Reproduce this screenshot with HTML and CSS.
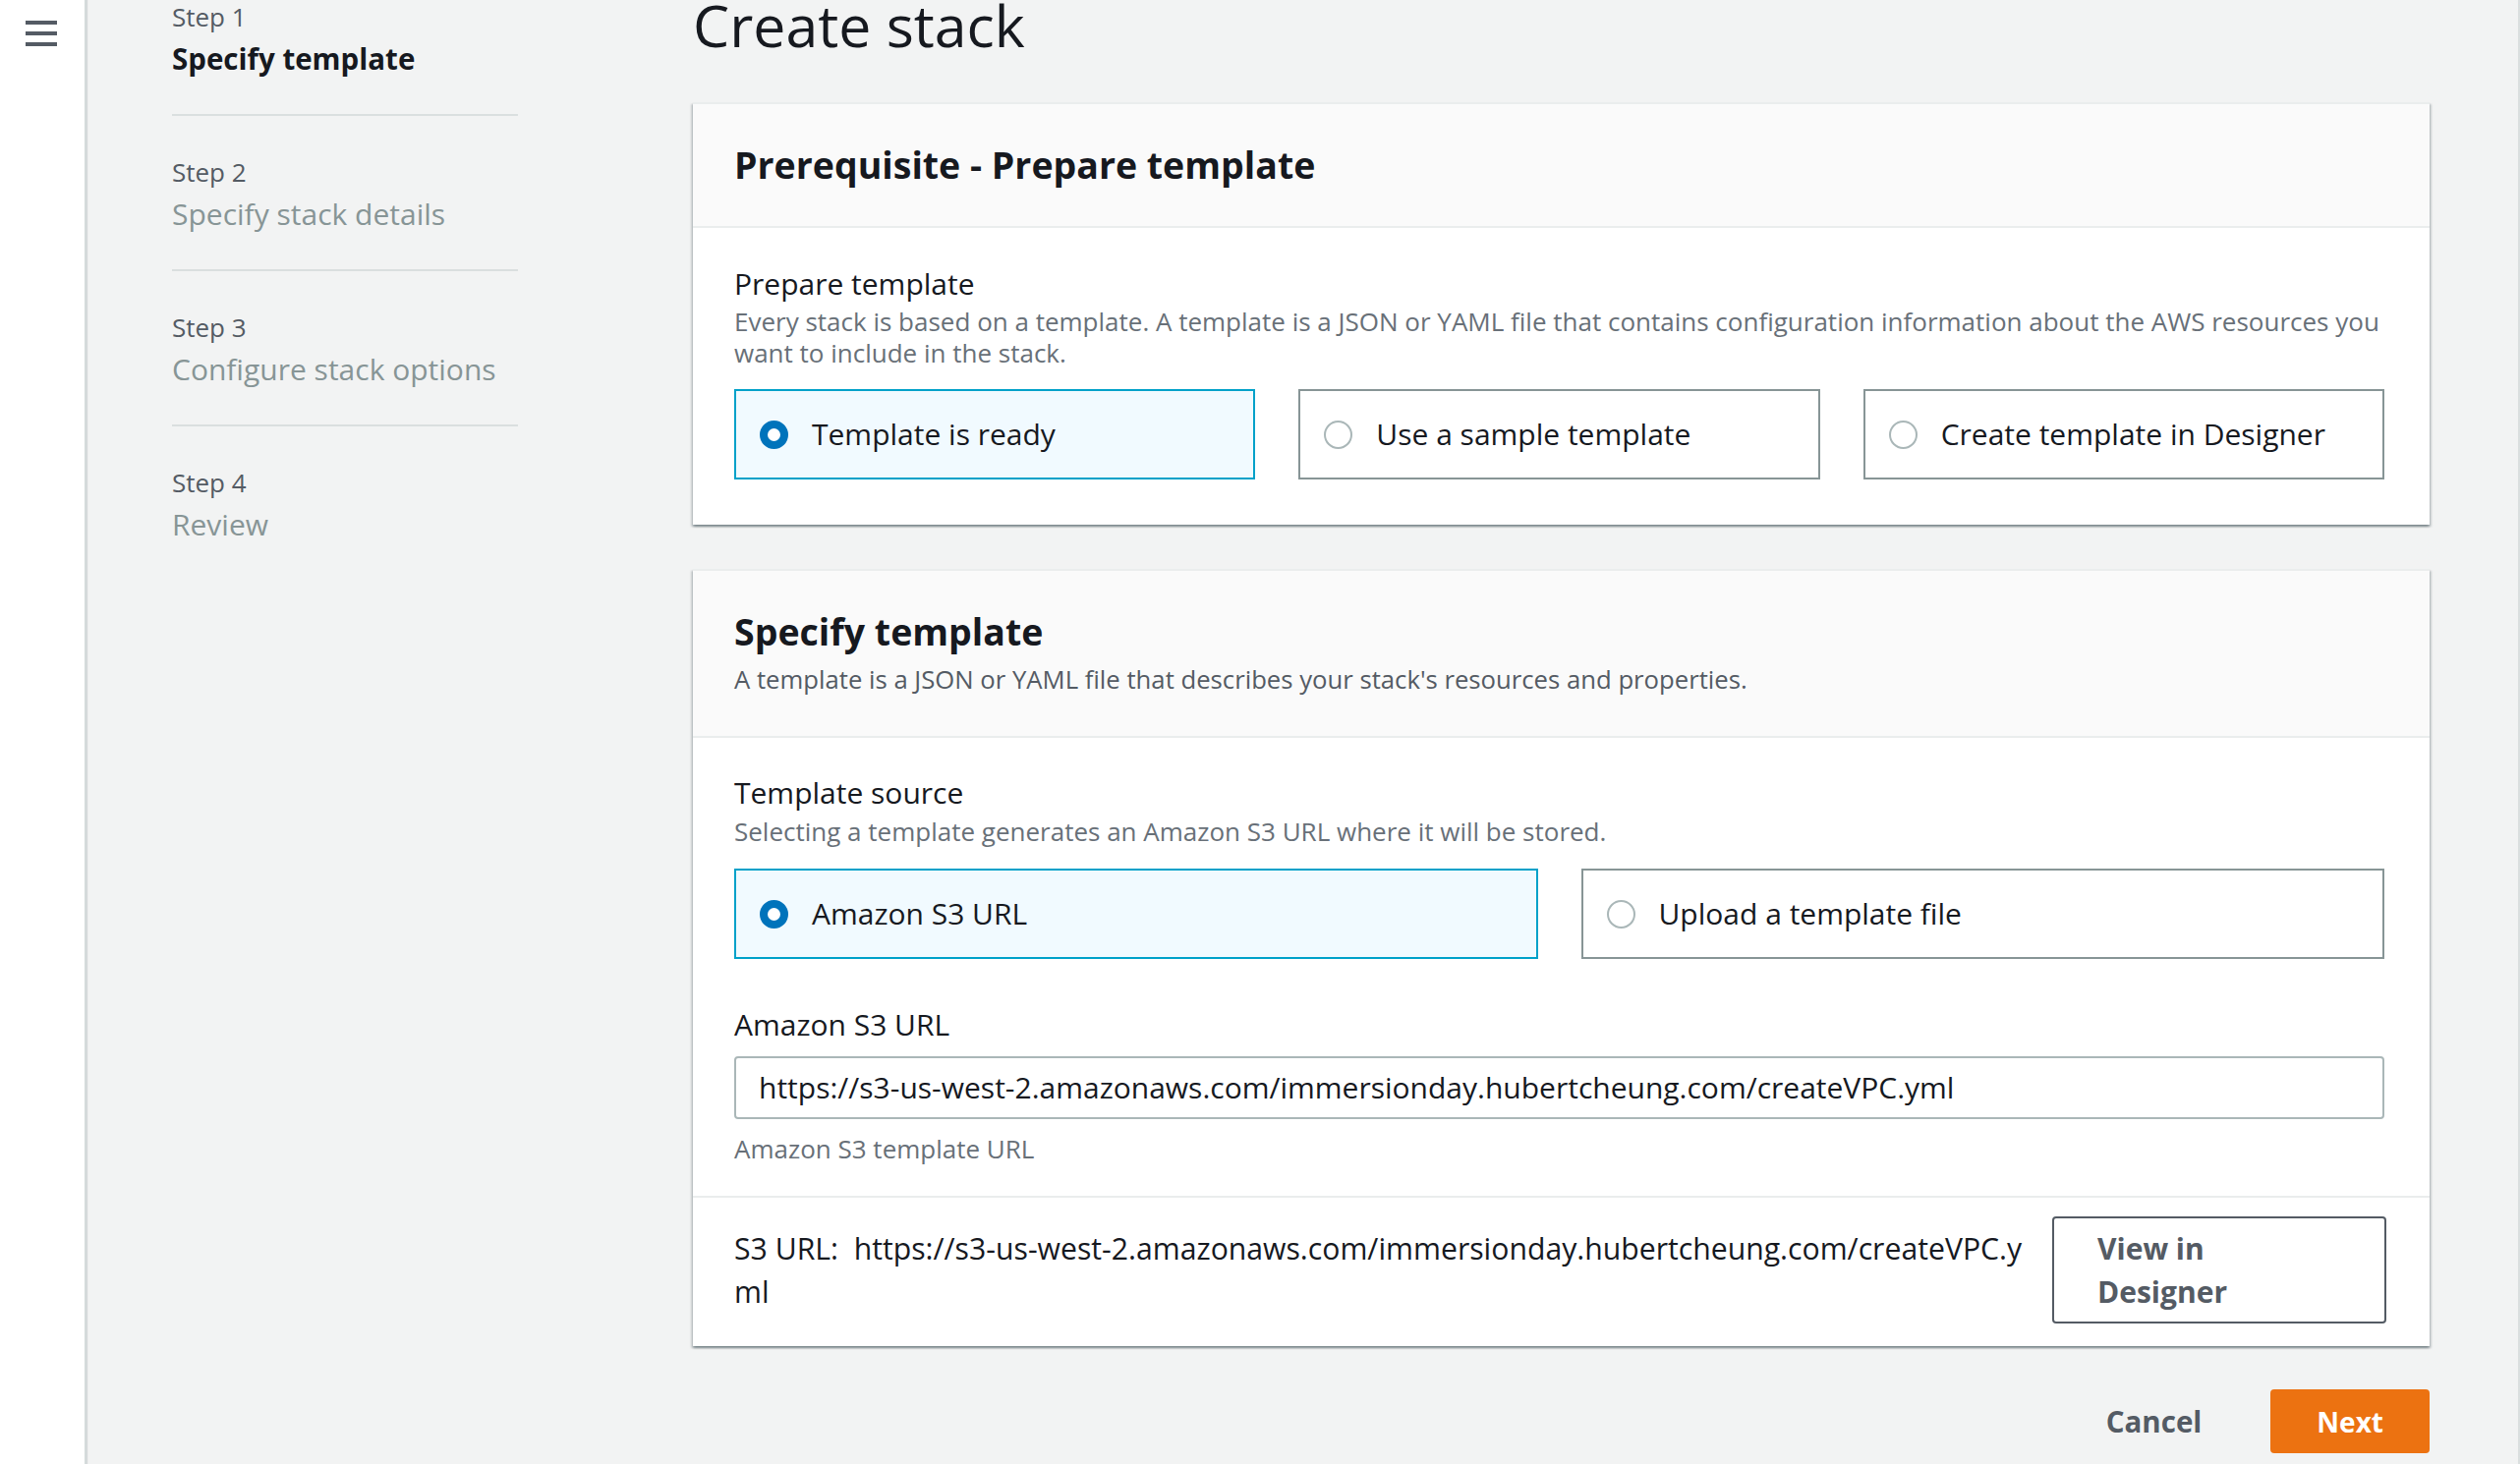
FILE: index.html
```html
<!DOCTYPE html>
<html lang="en">
<head>
<meta charset="utf-8">
<title>Create stack</title>
<link rel="stylesheet" href="styles.css">
</head>
<body>
<div class="page">
  <aside class="sidebar">
    <div class="hamburger" aria-label="Open navigation"><span></span><span></span><span></span></div>
  </aside>
  <div class="layout">
    <nav class="steps">
      <div class="step active first">
        <div class="step-label">Step 1</div>
        <div class="step-title">Specify template</div>
      </div>
      <div class="step">
        <div class="step-label">Step 2</div>
        <div class="step-title">Specify stack details</div>
      </div>
      <div class="step">
        <div class="step-label">Step 3</div>
        <div class="step-title">Configure stack options</div>
      </div>
      <div class="step last">
        <div class="step-label">Step 4</div>
        <div class="step-title">Review</div>
      </div>
    </nav>
    <main class="content">
      <h1 class="page-title">Create stack</h1>

      <section class="card">
        <div class="card-header">
          <h2 class="card-title">Prerequisite - Prepare template</h2>
        </div>
        <div class="card-body card-body-first">
          <div class="field-label">Prepare template</div>
          <div class="field-desc">Every stack is based on a template. A template is a JSON or YAML file that contains configuration information about the AWS resources you<br>want to include in the stack.</div>
          <div class="tiles tiles-3">
            <label class="tile selected"><span class="radio checked"></span><span class="tile-text">Template is ready</span></label>
            <label class="tile"><span class="radio"></span><span class="tile-text">Use a sample template</span></label>
            <label class="tile"><span class="radio"></span><span class="tile-text">Create template in Designer</span></label>
          </div>
        </div>
      </section>

      <section class="card card-second">
        <div class="card-header">
          <h2 class="card-title">Specify template</h2>
          <div class="card-desc">A template is a JSON or YAML file that describes your stack's resources and properties.</div>
        </div>
        <div class="card-body">
          <div class="field-label">Template source</div>
          <div class="field-desc tight">Selecting a template generates an Amazon S3 URL where it will be stored.</div>
          <div class="tiles tiles-2">
            <label class="tile selected"><span class="radio checked"></span><span class="tile-text">Amazon S3 URL</span></label>
            <label class="tile"><span class="radio"></span><span class="tile-text">Upload a template file</span></label>
          </div>
          <div class="field-label s3-label">Amazon S3 URL</div>
          <div class="input">https://s3-us-west-2.amazonaws.com/immersionday.hubertcheung.com/createVPC.yml</div>
          <div class="field-hint">Amazon S3 template URL</div>
        </div>
        <div class="card-footer">
          <div class="s3-text">S3 URL:&nbsp; https://s3-us-west-2.amazonaws.com/immersionday.hubertcheung.com/createVPC.y<br>ml</div>
          <button class="btn-outline">View in<br>Designer</button>
        </div>
      </section>

      <div class="actions">
        <button class="btn-link">Cancel</button>
        <button class="btn-primary">Next</button>
      </div>
    </main>
  </div>
</div>
</body>
</html>
```

FILE: styles.css
```css
html, body {
  margin: 0;
  padding: 0;
}
body {
  background: #f2f3f3;
  font-family: "Open Sans", "Noto Sans", sans-serif;
  color: #16191f;
  overflow: hidden;
}
.page {
  display: flex;
  height: 1490px;
  border-right: 2px solid #dadfdf;
  overflow: hidden;
}
.sidebar {
  flex: none;
  width: 88px;
  box-sizing: border-box;
  background: #ffffff;
  border-right: 2px solid #d5dbdb;
  box-shadow: 1px 0 1px rgba(0, 28, 36, 0.12);
}
.hamburger {
  display: flex;
  flex-direction: column;
  gap: 7px;
  width: 32px;
  margin: 21px 0 0 26px;
}
.hamburger span {
  display: block;
  height: 4px;
  background: #545b64;
}
.layout {
  flex: 1;
  display: grid;
  grid-template-columns: 352px 1fr;
  column-gap: 178px;
  padding: 0 90px 0 87px;
  align-items: start;
}

/* steps */
.step {
  padding: 40px 0 34px;
  border-bottom: 2px solid #dadfdf;
}
.step.first {
  padding-top: 0;
}
.step.last {
  border-bottom: none;
}
.step-label {
  font-size: 26px;
  line-height: 34px;
  color: #545b64;
}
.step-title {
  margin-top: 4px;
  font-size: 30px;
  line-height: 44px;
  color: #879596;
}
.step.active .step-title {
  color: #16191f;
  font-weight: 700;
  font-size: 29.5px;
}

/* content */
.page-title {
  font-size: 59px;
  font-weight: 400;
  line-height: 50px;
  margin: 0 0 54px;
  color: #16191f;
}
.card {
  background: #ffffff;
  border-top: 2px solid #eaeded;
  box-shadow: 0 2px 2px 0 rgba(0, 28, 36, 0.3), 2px 2px 2px 0 rgba(0, 28, 36, 0.15), -2px 2px 2px 0 rgba(0, 28, 36, 0.15);
}
.card-second {
  margin-top: 45px;
}
.card-header {
  background: #fafafa;
  border-bottom: 2px solid #eaeded;
  padding: 38px 46px 38px 42px;
}
.card-second .card-header {
  padding-bottom: 41px;
}
.card-title {
  margin: 0;
  font-size: 37.5px;
  line-height: 48px;
  font-weight: 700;
  color: #16191f;
}
.card-desc {
  margin-top: 9px;
  font-size: 25.7px;
  line-height: 32px;
  color: #545b64;
}
.card-body {
  padding: 36px 46px 32px 42px;
}
.card-body-first {
  padding-top: 37px;
  padding-bottom: 46px;
}
.field-label {
  font-size: 30px;
  line-height: 40px;
  color: #16191f;
}
.field-desc {
  margin-top: 2px;
  font-size: 26px;
  line-height: 32px;
  color: #687078;
}
.field-desc.tight {
  margin-top: 3px;
}
.tiles {
  display: grid;
  column-gap: 44px;
  margin-top: 21px;
}
.tiles-2 {
  grid-template-columns: 1fr 1fr;
  margin-top: 22px;
}
.tiles-3 {
  grid-template-columns: 1fr 1fr 1fr;
}
.tile {
  display: flex;
  align-items: center;
  gap: 24px;
  height: 92px;
  box-sizing: border-box;
  padding-left: 24px;
  border: 2px solid #879596;
  background: #ffffff;
}
.tile.selected {
  border-color: #00a1c9;
  background: #f1faff;
}
.radio {
  flex: none;
  width: 29px;
  height: 29px;
  box-sizing: border-box;
  border-radius: 50%;
  border: 2px solid #aab7b8;
  background: #ffffff;
}
.radio.checked {
  border: 8.5px solid #0073bb;
}
.tile-text {
  font-size: 30px;
  line-height: 40px;
  color: #16191f;
}
.s3-label {
  margin-top: 47px;
}
.input {
  margin-top: 12px;
  height: 64px;
  box-sizing: border-box;
  border: 2px solid #aab7b8;
  border-radius: 4px;
  padding-left: 23px;
  font-size: 30px;
  line-height: 60px;
  color: #16191f;
  white-space: nowrap;
  overflow: hidden;
}
.field-hint {
  margin-top: 14px;
  font-size: 26px;
  line-height: 32px;
  color: #687078;
}
.card-footer {
  display: flex;
  align-items: center;
  justify-content: space-between;
  border-top: 2px solid #eaeded;
  padding: 19px 44px 23px 42px;
}
.s3-text {
  font-size: 30.2px;
  line-height: 44px;
  color: #16191f;
}
.btn-outline {
  flex: none;
  width: 340px;
  height: 109px;
  box-sizing: border-box;
  border: 2px solid #545b64;
  border-radius: 4px;
  background: #ffffff;
  padding: 0 44px;
  text-align: left;
  font-family: inherit;
  font-size: 30px;
  line-height: 44px;
  font-weight: 700;
  color: #545b64;
}
.actions {
  display: flex;
  justify-content: flex-end;
  align-items: center;
  gap: 30px;
  margin-top: 44px;
}
.btn-link {
  border: none;
  background: transparent;
  padding: 0 40px;
  font-family: inherit;
  font-size: 29.5px;
  font-weight: 700;
  line-height: 65px;
  color: #545b64;
}
.btn-primary {
  border: none;
  border-radius: 4px;
  background: #ec7211;
  height: 65px;
  padding: 0 47px;
  font-family: inherit;
  font-size: 28px;
  font-weight: 700;
  color: #ffffff;
}
```
